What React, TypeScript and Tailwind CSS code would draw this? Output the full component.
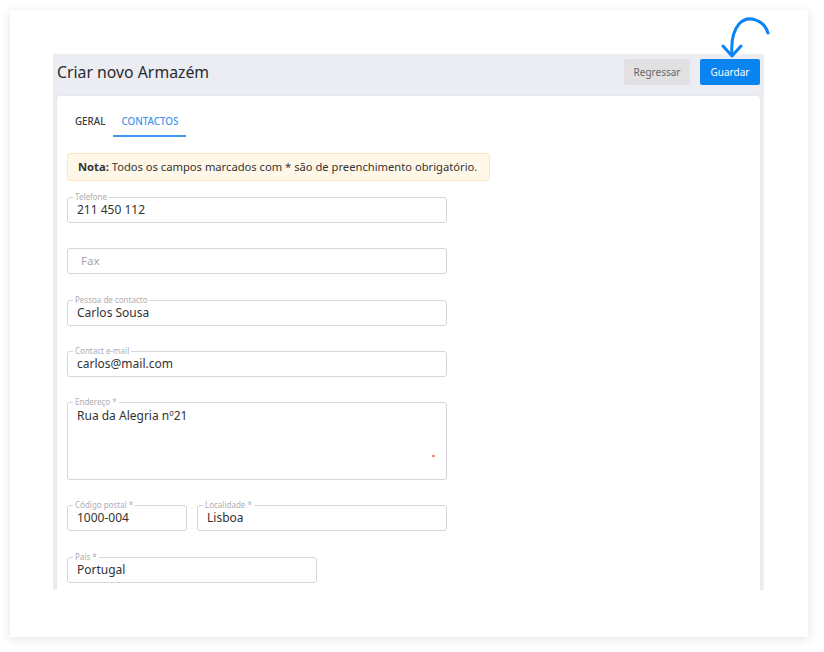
import React from "react";

const font = { fontFamily: '"Noto Sans", "Open Sans", Arial, sans-serif' };

function Field({ label, value, placeholder, className = "", tall = false }: { label?: string; value?: string; placeholder?: string; className?: string; tall?: boolean }) {
  return (
    <div className={`relative rounded-[3px] border border-[#d6d6d9] bg-white ${tall ? "h-[78px]" : "h-[26px]"} ${className}`}>
      {label && (
        <span className="absolute -top-[7px] left-[5px] bg-white px-[2px] text-[8px] leading-[12px] text-[#aeaeb3]">
          {label}
        </span>
      )}
      {value && (
        <div className={`pl-[9px] text-[12px] text-[#333] ${tall ? "pt-[5px]" : "pt-[4px]"} leading-[16px]`}>{value}</div>
      )}
      {placeholder && <div className="pl-[13px] pt-[4px] text-[11.5px] leading-[16px] text-[#a5a5aa]">{placeholder}</div>}
      {tall && <span className="absolute left-[364px] top-[52px] h-[1.5px] w-[3px] bg-[#f08a7a]" />}
    </div>
  );
}

export default function App() {
  return (
    <div className="min-h-screen w-full bg-white" style={font}>
      <div className="pl-[10px] pt-[10px]">
        <div className="w-[798px] h-[627px] bg-white shadow-[0_2px_10px_rgba(30,40,70,0.13)] pl-[43px] pt-[44px] relative">
          {/* hint arrow */}
          <svg className="absolute left-[700px] top-0" width="70" height="52" viewBox="710 10 70 52" fill="none">
            <path d="M768 33 C 764 20, 748 14, 739 24 C 733 31, 731 42, 732 55" stroke="#0a84f5" strokeWidth="3" strokeLinecap="round" />
            <path d="M723 46 L732 56 L741 46" stroke="#0a84f5" strokeWidth="3" strokeLinecap="round" strokeLinejoin="round" />
          </svg>

          <div className="w-[711px] h-[536px] bg-[#ecedf2] overflow-hidden px-[4px]">
            <div className="flex items-start justify-between h-[42px] pt-[5px]">
              <h1 className="text-[15.8px] leading-[22px] text-[#2a2a2e] pt-[2px]">Criar novo Armazém</h1>
              <div className="flex gap-[10px]">
                <button className="h-[26px] w-[66px] rounded-[2px] bg-[#e1e1e3] text-[10px] text-[#666]">Regressar</button>
                <button className="h-[26px] w-[60px] rounded-[2px] bg-[#0a84f0] text-[10px] text-white">Guardar</button>
              </div>
            </div>

            <div className="bg-white rounded-[3px] shadow-[0_0_2px_rgba(0,0,0,0.08)] h-[520px] px-[10px] pt-[9px]">
              <div className="flex text-[9.8px] font-medium h-[32px]">
                <div className="px-[8px] pt-[10px] text-[#3a3a3e]">GERAL</div>
                <div className="px-[8px] pt-[10px] text-[#3d95ef] border-b-2 border-[#3d95ef]">CONTACTOS</div>
              </div>

              <div className="mt-[16px] w-[423px] h-[28px] rounded-[3px] border border-[#fbe7bd] bg-[#fff8e8] pl-[10px] pt-[5px] text-[11.2px] leading-[16px] text-[#333]">
                <b className="font-bold">Nota:</b> Todos os campos marcados com * são de preenchimento obrigatório.
              </div>

              <div className="mt-[16px] flex flex-col gap-[25.3px] w-[380px]">
                <Field label="Telefone" value="211 450 112" />
                <Field placeholder="Fax" />
                <Field label="Pessoa de contacto" value="Carlos Sousa" />
                <Field label="Contact e-mail" value="carlos@mail.com" />
                <Field label="Endereço *" value="Rua da Alegria nº21" tall />
                <div className="flex gap-[10px]">
                  <Field label="Código postal *" value="1000-004" className="w-[120px]" />
                  <Field label="Localidade *" value="Lisboa" className="w-[250px]" />
                </div>
                <Field label="País *" value="Portugal" className="w-[250px]" />
              </div>
            </div>
          </div>
        </div>
      </div>
    </div>
  );
}
